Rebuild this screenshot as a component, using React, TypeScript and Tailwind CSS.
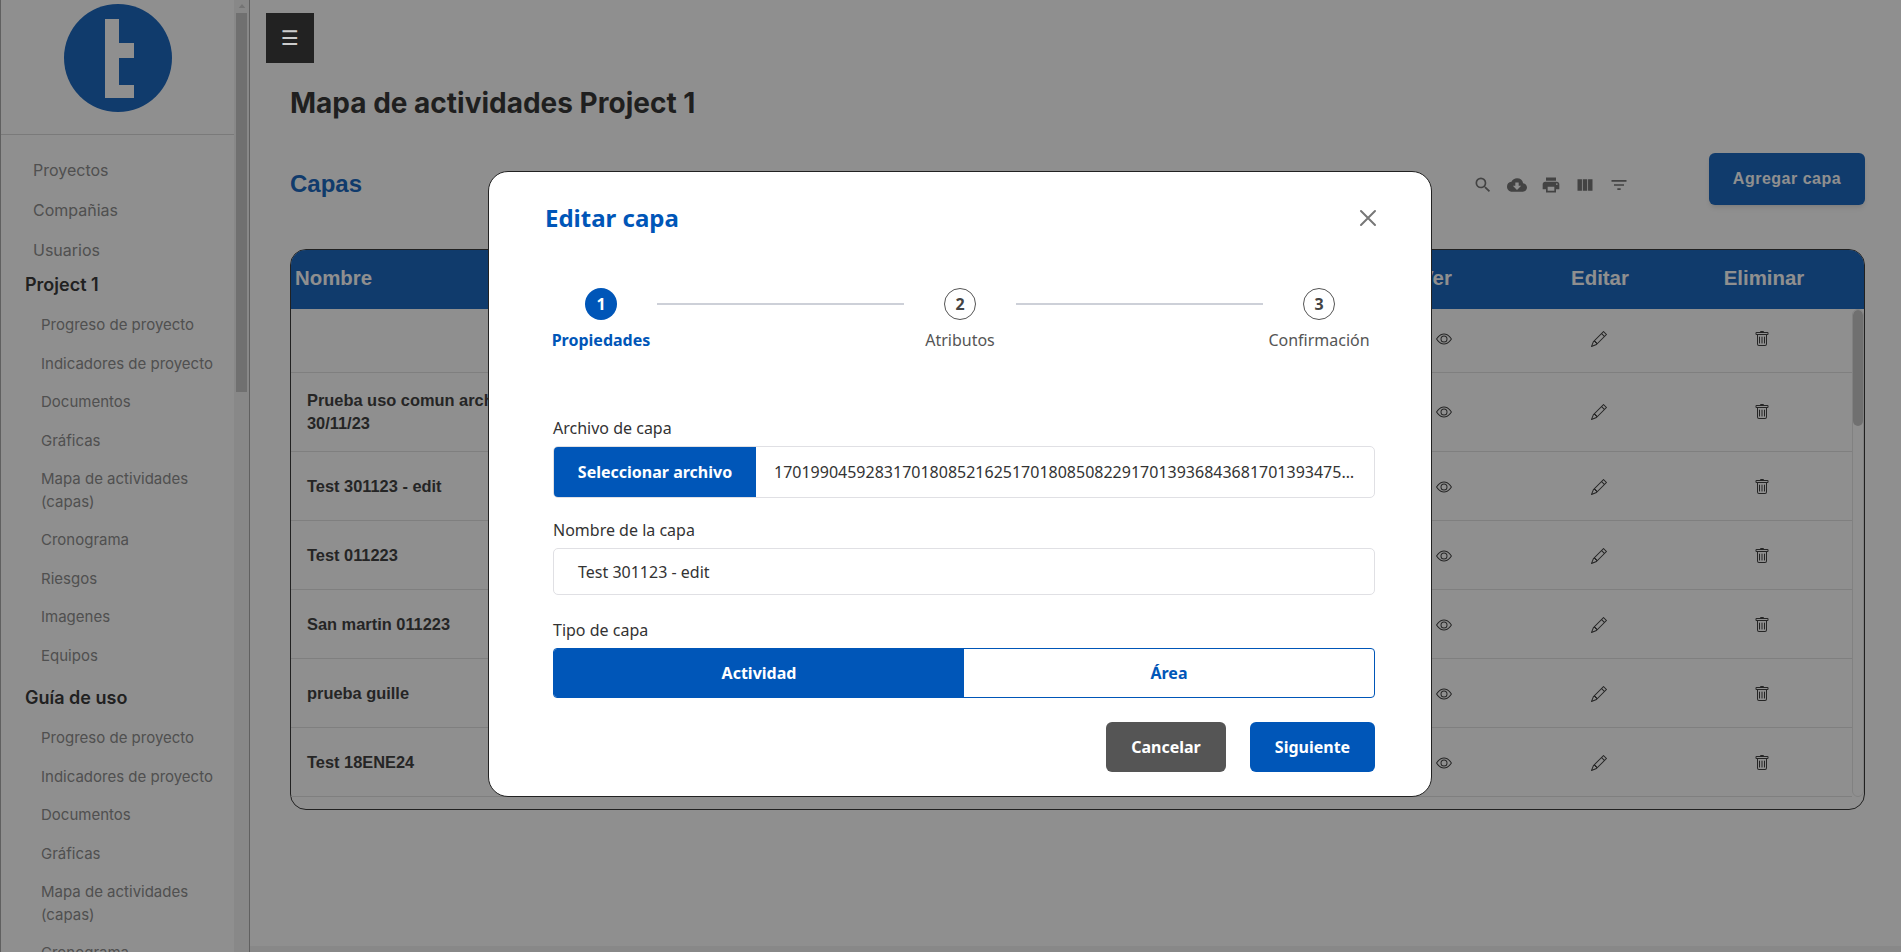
import { BsEye, BsPencil, BsTrash } from 'react-icons/bs'
import {
  MdCloudDownload,
  MdFilterList,
  MdPrint,
  MdSearch,
  MdViewColumn,
} from 'react-icons/md'
import { IoCloseOutline } from 'react-icons/io5'

const GROUP_ITEMS = [
  'Progreso de proyecto',
  'Indicadores de proyecto',
  'Documentos',
  'Gráficas',
  'Mapa de actividades (capas)',
  'Cronograma',
  'Riesgos',
  'Imagenes',
  'Equipos',
]

const ROWS = [
  { name: '', height: 'h-[64px]', iconOffset: 'mb-[4px]' },
  { name: 'Prueba uso comun archivos\n30/11/23', height: 'h-[79px]', iconOffset: 'mt-0' },
  { name: 'Test 301123 - edit', height: 'h-[69px]', iconOffset: 'mt-[2px]' },
  { name: 'Test 011223', height: 'h-[69px]', iconOffset: 'mt-[2px]' },
  { name: 'San martin 011223', height: 'h-[69px]', iconOffset: 'mt-[2px]' },
  { name: 'prueba guille', height: 'h-[69px]', iconOffset: 'mt-[2px]' },
  { name: 'Test 18ENE24', height: 'h-[69px]', iconOffset: 'mt-[2px]' },
]

const STEPS = [
  { n: 1, label: 'Propiedades' },
  { n: 2, label: 'Atributos' },
  { n: 3, label: 'Confirmación' },
]

function SideGroup({ title }: { title: string }) {
  return (
    <div>
      <div className="pl-[24px] text-[18px] leading-[24px] font-semibold text-[#222]">
        {title}
      </div>
      <ul className="pt-[9px] pl-[40px] pr-[20px]">
        {GROUP_ITEMS.map((item) => (
          <li key={item} className="py-[8px] text-[15px] leading-[22.5px] text-[#808080]">
            {item}
          </li>
        ))}
      </ul>
    </div>
  )
}

function Sidebar() {
  return (
    <aside className="flex h-full w-[250px] shrink-0 border-r border-l border-[#a0a0a0] font-['Inter',sans-serif]">
      <div className="h-full w-[233px] shrink-0 overflow-hidden">
        <div className="flex h-[135px] justify-center border-b border-[#d4d4d4] pt-[4px]">
          <svg viewBox="0 0 108 108" className="h-[108px] w-[108px]">
            <circle cx="54" cy="54" r="54" fill="#0056b8" />
            <path d="M41 15h14v24h15v15H55v27h15v13H41z" fill="#fff" />
          </svg>
        </div>
        <ul className="pt-[15px] pl-[32px]">
          {['Proyectos', 'Compañias', 'Usuarios'].map((item) => (
            <li key={item} className="h-[40px] py-[8px] text-[16px] leading-[24px] text-[#808080]">
              {item}
            </li>
          ))}
        </ul>
        <div className="mt-[3px] flex flex-col gap-[11px]">
          <SideGroup title="Project 1" />
          <SideGroup title="Guía de uso" />
        </div>
      </div>
      <div className="relative h-full w-[15px] shrink-0 bg-[#f1f1f1]">
        <svg viewBox="0 0 10 6" className="mx-auto mt-[4px] h-[4px] w-[8px] fill-[#c8c8c8]">
          <path d="M5 0l5 6H0z" />
        </svg>
        <div className="mx-auto mt-[5px] h-[379px] w-[11px] bg-[#c1c1c1]" />
      </div>
    </aside>
  )
}

function LayersTable() {
  return (
    <div className="ml-[40px] mt-[44px] h-[561px] w-[1575px] overflow-hidden rounded-[16px] border border-[#222] font-['Liberation_Sans',sans-serif]">
      <div className="flex h-[59px] items-center bg-[#0056b8] pb-[2px] text-[20.4px] font-bold text-white">
        <div className="flex-1 pl-[4px]">Nombre</div>
        <div className="w-[164px] text-center">Ver</div>
        <div className="w-[164px] text-center">Editar</div>
        <div className="w-[164px] text-center">Eliminar</div>
        <div className="w-[18px]" />
      </div>
      <div className="relative pr-[12px]">
        {ROWS.map((row) => (
          <div
            key={row.name}
            className={`flex items-center border-b border-[#dedede] text-[#2b2b2b] ${row.height}`}
          >
            <div className="flex-1 whitespace-pre-line pl-[16px] text-[16.4px] leading-[23px] font-bold">
              {row.name}
            </div>
            <div className={`flex w-[148px] justify-center ${row.iconOffset}`}>
              <BsEye className="h-[16px] w-[16px]" />
            </div>
            <div className={`flex w-[162px] justify-center ${row.iconOffset}`}>
              <BsPencil className="h-[16px] w-[16px]" />
            </div>
            <div className={`flex w-[164px] justify-center ${row.iconOffset}`}>
              <BsTrash className="h-[16px] w-[16px]" />
            </div>
            <div className="w-[8px]" />
          </div>
        ))}
        <div className="absolute top-0 right-0 h-[488px] w-[12px] overflow-hidden rounded-[6px] border border-[#e3e3e3] bg-white">
          <div className="h-[116px] rounded-[6px] bg-[#c1c1c1]" />
        </div>
      </div>
    </div>
  )
}

function MainContent() {
  return (
    <main className="min-w-0 flex-1">
      <div className="h-[63px]" />
      <h1 className="ml-[40px] mt-[20px] font-['Inter',sans-serif] text-[28px] leading-[40px] font-bold text-[#1f1f1f]">
        Mapa de actividades Project 1
      </h1>
      <div className="mt-[30px] flex h-[52px] items-center pr-[36px] pl-[40px]">
        <h2 className="flex-1 pt-[10px] font-['Liberation_Sans',sans-serif] text-[24px] font-bold text-[#0056b8]">
          Capas
        </h2>
        <div className="mr-[80px] flex items-center gap-[14px] pt-[11px] text-[#666]">
          <MdSearch className="h-[20px] w-[20px]" />
          <MdCloudDownload className="h-[20px] w-[20px]" />
          <MdPrint className="h-[20px] w-[20px]" />
          <MdViewColumn className="h-[20px] w-[20px]" />
          <MdFilterList className="h-[20px] w-[20px]" />
        </div>
        <button className="h-[52px] w-[156px] rounded-[6px] bg-[#0056b8] pb-[1px] font-['Liberation_Sans',sans-serif] text-[16px] font-bold tracking-[0.5px] text-white shadow-md">
          Agregar capa
        </button>
      </div>
      <LayersTable />
    </main>
  )
}

function Stepper() {
  return (
    <div className="mt-[46px] ml-[-8px] flex h-[64px] items-start">
      {STEPS.map((step, i) => (
        <div key={step.n} className="contents">
          {i > 0 && <div className="mt-[15px] h-[2px] w-[247px] shrink-0 bg-[#cdd0d8]" />}
          <div className="flex w-[112px] shrink-0 flex-col items-center">
            <div
              className={
                step.n === 1
                  ? 'flex h-[32px] w-[32px] items-center justify-center rounded-full bg-[#0056b8] text-[16px] font-bold text-white'
                  : 'flex h-[32px] w-[32px] items-center justify-center rounded-full border border-[#555] text-[16px] font-bold text-[#444]'
              }
            >
              {step.n}
            </div>
            <div
              className={
                step.n === 1
                  ? 'mt-[8px] whitespace-nowrap text-[16px] leading-[24px] font-bold text-[#0056b8]'
                  : 'mt-[8px] whitespace-nowrap text-[16px] leading-[24px] text-[#555]'
              }
            >
              {step.label}
            </div>
          </div>
        </div>
      ))}
    </div>
  )
}

function EditLayerModal() {
  return (
    <div className="absolute inset-0 bg-[rgba(32,32,32,0.5)]">
      <div className="ml-[488px] mt-[171px] flex h-[626px] w-[944px] flex-col rounded-[20px] border border-[#222] bg-white pr-[56px] pl-[64px] pt-[22px] font-['Noto_Sans',sans-serif]">
        <div className="ml-[-8px] flex items-center justify-between">
          <h3 className="text-[24px] leading-[48px] font-bold text-[#0056b8]">Editar capa</h3>
          <IoCloseOutline className="mr-[-9px] h-[32px] w-[32px] text-[#777]" />
        </div>
        <Stepper />
        <label className="mt-[64px] text-[16px] leading-[24px] text-[#333]">Archivo de capa</label>
        <div className="mt-[6px] flex h-[52px] items-center overflow-hidden rounded-[5px] border border-[#e0e0e4]">
          <div className="flex h-full w-[202px] shrink-0 items-center justify-center bg-[#0056b8] text-[16px] font-bold text-white">
            Seleccionar archivo
          </div>
          <div className="min-w-0 flex-1 truncate pr-[12px] pl-[18px] text-[16px] text-[#333]">
            17019904592831701808521625170180850822917013936843681701393475643
          </div>
        </div>
        <label className="mt-[20px] text-[16px] leading-[24px] text-[#333]">Nombre de la capa</label>
        <div className="mt-[6px] flex h-[47px] items-center rounded-[5px] border border-[#e0e0e4] pl-[24px] text-[16px] text-[#333]">
          Test 301123 - edit
        </div>
        <label className="mt-[23px] text-[16px] leading-[24px] text-[#333]">Tipo de capa</label>
        <div className="mt-[6px] flex h-[50px] overflow-hidden rounded-[4px] border border-[#0056b8] text-[16px] font-bold">
          <div className="flex w-1/2 items-center justify-center bg-[#0056b8] text-white">Actividad</div>
          <div className="flex w-1/2 items-center justify-center text-[#0056b8]">Área</div>
        </div>
        <div className="mt-[24px] flex justify-end gap-[24px] text-[16px] font-bold text-white">
          <button className="h-[50px] w-[120px] rounded-[6px] bg-[#555]">Cancelar</button>
          <button className="h-[50px] w-[125px] rounded-[6px] bg-[#0056b8]">Siguiente</button>
        </div>
      </div>
    </div>
  )
}

export default function App() {
  return (
    <div className="relative flex h-[952px] overflow-hidden bg-white">
      <Sidebar />
      <MainContent />
      <div className="absolute right-0 bottom-0 left-[250px] h-[6px] bg-[#f1f1f1]" />
      <EditLayerModal />
      <button className="absolute top-[13px] left-[266px] flex h-[50px] w-[48px] items-center justify-center bg-[#222] pb-[1px] font-['DejaVu_Sans',sans-serif] text-[20px] text-[#cccccc]">
        ☰
      </button>
    </div>
  )
}
